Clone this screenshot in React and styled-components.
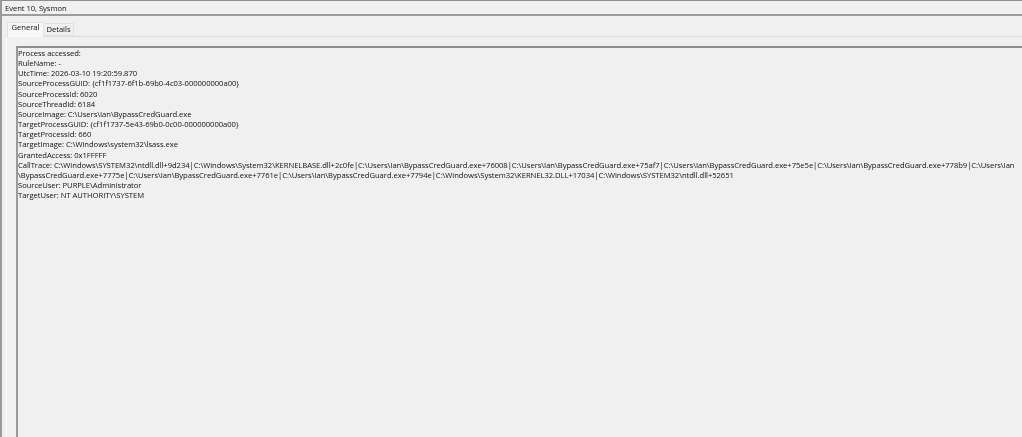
import React from "react";
import styled, { createGlobalStyle } from "styled-components";

const GlobalStyle = createGlobalStyle`
  html, body {
    margin: 0;
    padding: 0;
    background: #f0f0f0;
  }
`;

const Window = styled.div`
  box-sizing: border-box;
  width: 1022px;
  height: 437px;
  overflow: hidden;
  display: flex;
  flex-direction: column;
  background: #f0f0f0;
  border-top: 1px solid #8f8f8f;
  border-left: 2px solid #9a9a9a;
  font-family: "Open Sans", "Noto Sans", sans-serif;
  font-size: 7.65px;
  letter-spacing: -0.05px;
  color: #111;
  filter: blur(0.25px);
`;

const TitleBar = styled.div`
  box-sizing: border-box;
  height: 15px;
  flex: none;
  padding: 1px 0 0 3px;
  line-height: 12px;
  border-bottom: 2px solid #9c9c9c;
`;

const Body = styled.div`
  flex: 1;
  display: flex;
  flex-direction: column;
  padding: 5px 0 0 4px;
  min-height: 0;
`;

const TabStrip = styled.div`
  flex: none;
  height: 15px;
  display: flex;
  align-items: flex-end;
  padding-left: 1px;
  border-bottom: 1px solid #dcdcdc;
`;

const Tab = styled.div`
  box-sizing: border-box;
  height: ${(p) => (p.$active ? "15px" : "13px")};
  width: ${(p) => (p.$active ? "37px" : "30px")};
  margin-bottom: ${(p) => (p.$active ? "-1px" : "0")};
  text-align: center;
  line-height: ${(p) => (p.$active ? "9px" : "11px")};
  background: ${(p) => (p.$active ? "#f7f7f7" : "#f0f0f0")};
  border: 1px solid #e2e2e2;
  border-bottom: ${(p) => (p.$active ? "none" : "1px solid #e2e2e2")};
  border-left: ${(p) => (p.$active ? "1px solid #e2e2e2" : "none")};
`;

const TabPanel = styled.div`
  flex: 1;
  min-height: 0;
  padding: 9px 0 0 9px;
  border-left: 1px solid #fbfbfb;
  display: flex;
`;

const TextBox = styled.div`
  box-sizing: border-box;
  flex: 1;
  border-top: 2px solid #8e8e8e;
  border-left: 2px solid #9a9a9a;
  background: #f0f0f0;
`;

const Line = styled.div`
  height: 10.17px;
  line-height: 10.17px;
  white-space: nowrap;
`;

const lines = [
  "Process accessed:",
  "RuleName: -",
  "UtcTime: 2026-03-10 19:20:59.870",
  "SourceProcessGUID: {cf1f1737-6f1b-69b0-4c03-000000000a00}",
  "SourceProcessId: 6020",
  "SourceThreadId: 6184",
  "SourceImage: C:\\Users\\Ian\\BypassCredGuard.exe",
  "TargetProcessGUID: {cf1f1737-5e43-69b0-0c00-000000000a00}",
  "TargetProcessId: 660",
  "TargetImage: C:\\Windows\\system32\\lsass.exe",
  "GrantedAccess: 0x1FFFFF",
  "CallTrace: C:\\Windows\\SYSTEM32\\ntdll.dll+9d234|C:\\Windows\\System32\\KERNELBASE.dll+2c0fe|C:\\Users\\Ian\\BypassCredGuard.exe+76008|C:\\Users\\Ian\\BypassCredGuard.exe+75af7|C:\\Users\\Ian\\BypassCredGuard.exe+75e5e|C:\\Users\\Ian\\BypassCredGuard.exe+778b9|C:\\Users\\Ian",
  "\\BypassCredGuard.exe+7775e|C:\\Users\\Ian\\BypassCredGuard.exe+7761e|C:\\Users\\Ian\\BypassCredGuard.exe+7794e|C:\\Windows\\System32\\KERNEL32.DLL+17034|C:\\Windows\\SYSTEM32\\ntdll.dll+52651",
  "SourceUser: PURPLE\\Administrator",
  "TargetUser: NT AUTHORITY\\SYSTEM",
];

const App = () => {
  return (
    <>
      <GlobalStyle />
      <Window>
        <TitleBar>Event 10, Sysmon</TitleBar>
        <Body>
          <TabStrip>
            <Tab $active>General</Tab>
            <Tab>Details</Tab>
          </TabStrip>
          <TabPanel>
            <TextBox>
              {lines.map((line) => (
                <Line key={line}>{line}</Line>
              ))}
            </TextBox>
          </TabPanel>
        </Body>
      </Window>
    </>
  );
};

export default App;
